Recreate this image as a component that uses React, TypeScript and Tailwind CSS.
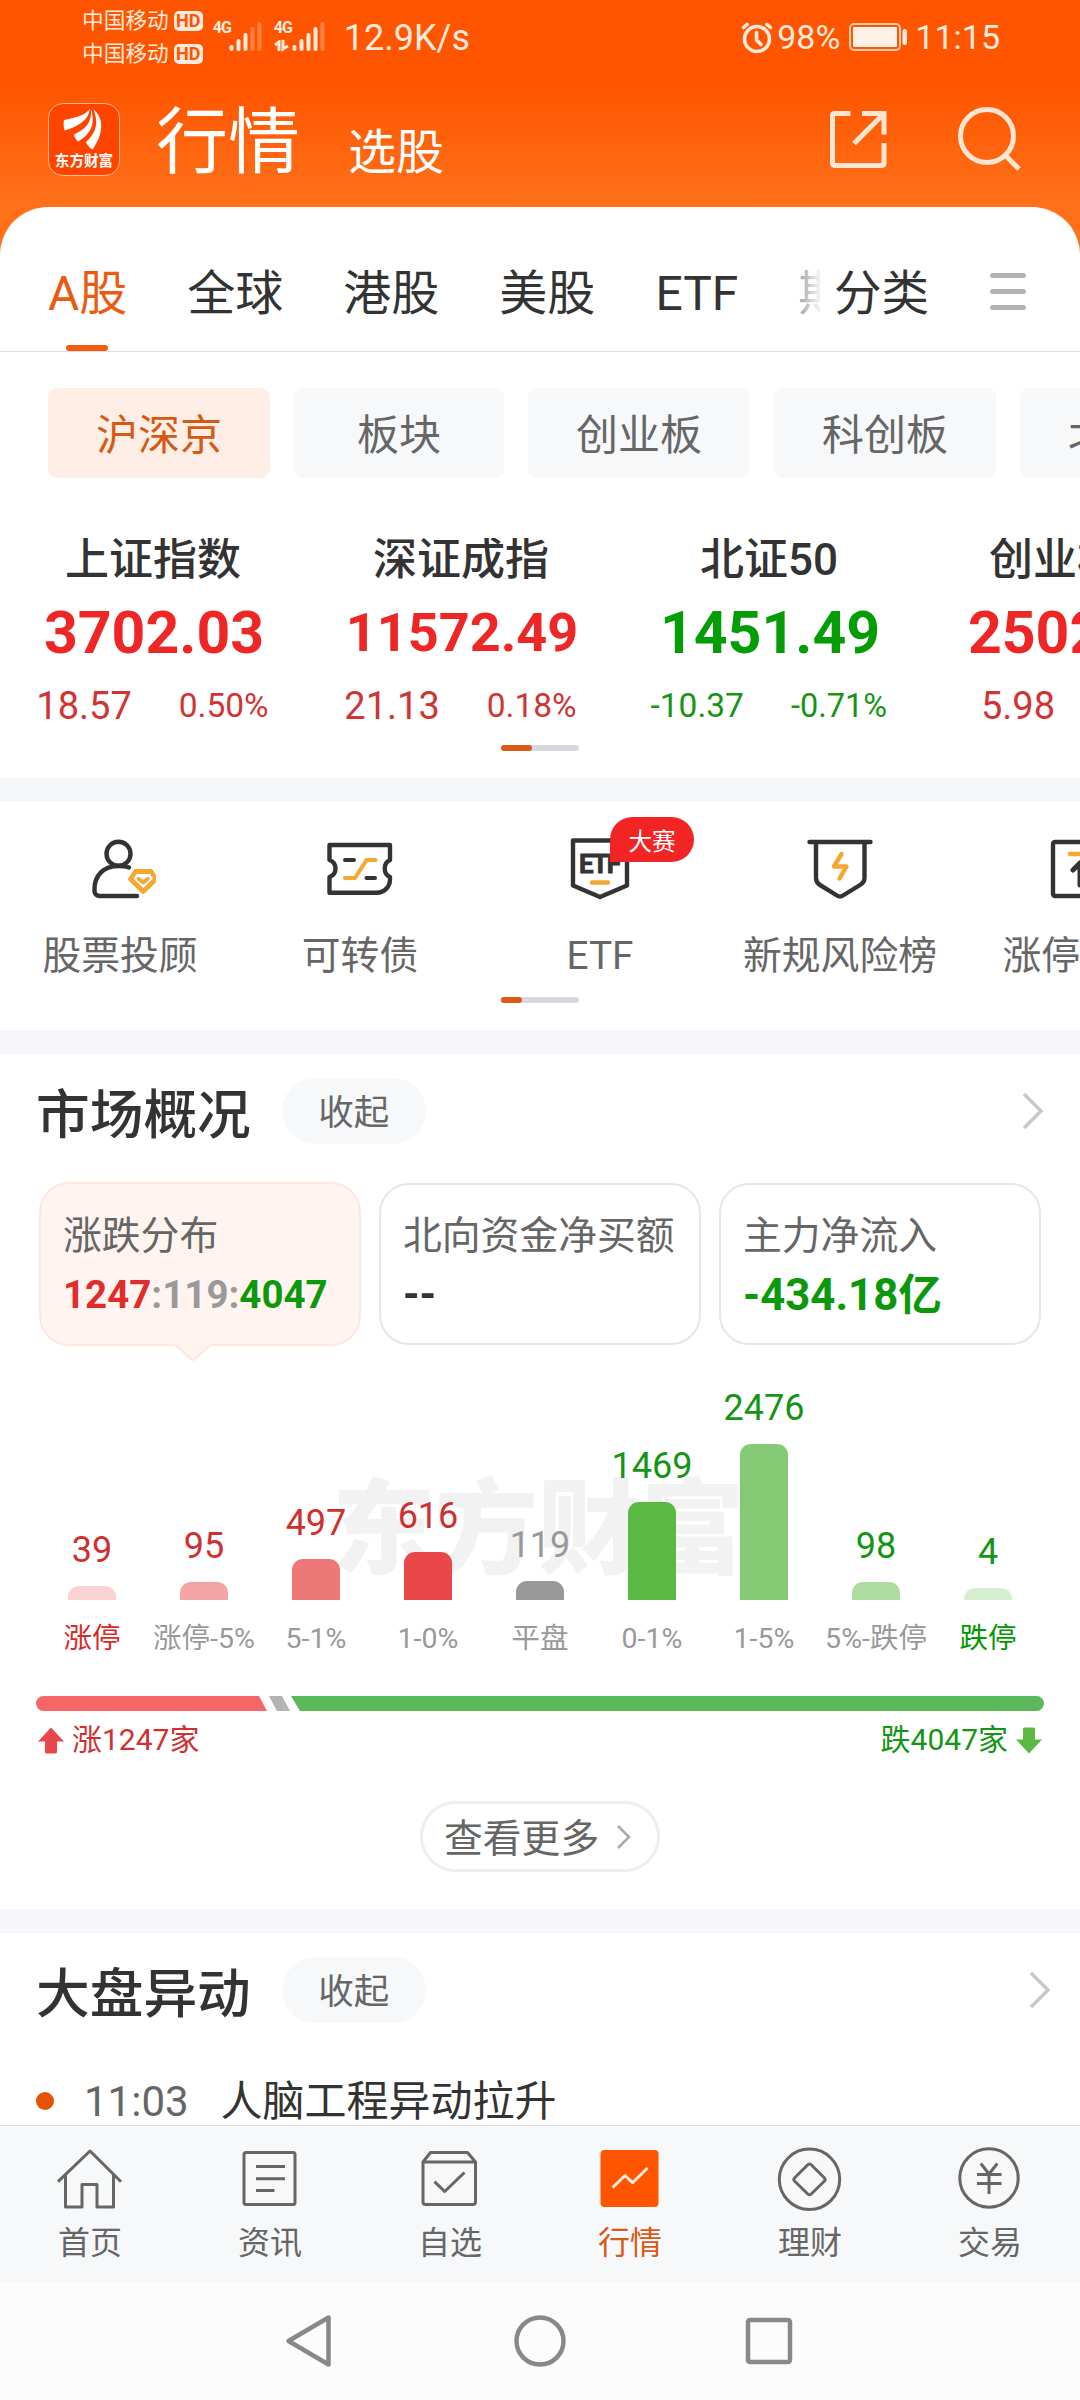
import React from 'react';

type Trend = 'up' | 'down';

interface IndexQuote {
  name: string;
  value: string;
  change: string;
  percent: string;
  trend: Trend;
}

const tabs = ['A股', '全球', '港股', '美股', 'ETF', '期货'];

const chips = ['沪深京', '板块', '创业板', '科创板', '北交所'];

const indices: IndexQuote[] = [
  { name: '上证指数', value: '3702.03', change: '18.57', percent: '0.50%', trend: 'up' },
  { name: '深证成指', value: '11572.49', change: '21.13', percent: '0.18%', trend: 'up' },
  { name: '北证50', value: '1451.49', change: '-10.37', percent: '-0.71%', trend: 'down' },
  { name: '创业板指', value: '2502.66', change: '5.98', percent: '0.24%', trend: 'up' },
];

const distribution = [
  { label: '涨停', count: 39, height: 14, bar: 'bg-[#f9d2d2]', text: 'text-[#cf3030]', labelColor: 'text-[#d82828]' },
  { label: '涨停-5%', count: 95, height: 18, bar: 'bg-[#f3a5a5]', text: 'text-[#cf3030]', labelColor: 'text-[#999999]' },
  { label: '5-1%', count: 497, height: 41, bar: 'bg-[#ee7777]', text: 'text-[#cf3030]', labelColor: 'text-[#999999]' },
  { label: '1-0%', count: 616, height: 48, bar: 'bg-[#e84848]', text: 'text-[#cf3030]', labelColor: 'text-[#999999]' },
  { label: '平盘', count: 119, height: 19, bar: 'bg-[#999999]', text: 'text-[#999999]', labelColor: 'text-[#999999]' },
  { label: '0-1%', count: 1469, height: 98, bar: 'bg-[#5ab942]', text: 'text-[#159515]', labelColor: 'text-[#999999]' },
  { label: '1-5%', count: 2476, height: 156, bar: 'bg-[#84ca74]', text: 'text-[#159515]', labelColor: 'text-[#999999]' },
  { label: '5%-跌停', count: 98, height: 18, bar: 'bg-[#addca1]', text: 'text-[#159515]', labelColor: 'text-[#999999]' },
  { label: '跌停', count: 4, height: 12, bar: 'bg-[#d6eed0]', text: 'text-[#159515]', labelColor: 'text-[#009900]' },
];

const SignalBars = ({ active }: { active: number }) => (
  <svg width="34" height="32" viewBox="0 0 34 32" stroke="#ffeadb" strokeWidth="4" strokeLinecap="round">
    {[25, 19, 13, 7, 2].map((top, i) => (
      <path key={i} d={`M${2.5 + i * 7} ${top + 2}V29`} opacity={i < active ? 1 : 0.3} />
    ))}
  </svg>
);

const StatusBar = () => (
  <div className="flex h-[75px] items-start text-[#ffeadb]">
    <div className="ml-[82px] flex flex-col gap-[11px] pt-[10px]">
      {[0, 1].map(i => (
        <div key={i} className="flex h-[22px] items-center gap-[5px]">
          <span className="text-[21.7px] leading-[22px]">中国移动</span>
          <span className="flex h-[20px] w-[29px] items-center justify-center rounded-[5px] bg-[#ffeadb] text-[18px] leading-none font-bold text-[#ff5500]">
            HD
          </span>
        </div>
      ))}
    </div>
    <div className="mt-[20px] ml-[10px] flex">
      <span className="w-[16px] text-[16px] leading-[16px] font-bold tracking-[-1px]">4G</span>
      <SignalBars active={3} />
    </div>
    <div className="mt-[20px] ml-[11px] flex">
      <div className="w-[18px]">
        <span className="block text-[16px] leading-[16px] font-bold tracking-[-1px]">4G</span>
        <svg width="16" height="12" viewBox="0 0 16 12" className="mt-[4px]" fill="none" stroke="#ffeadb" strokeWidth="3">
          <path d="M1 5L5 2V11M9 0V9L14 6" />
        </svg>
      </div>
      <SignalBars active={4} />
    </div>
    <span className="mt-[19px] ml-[18px] text-[36px] leading-[38px]">12.9K/s</span>
    <div className="mt-[18px] mr-[80px] ml-auto flex items-center">
      <svg width="32" height="34" viewBox="0 0 32 34" fill="none" stroke="#ffeadb" strokeWidth="3.6" strokeLinecap="round">
        <circle cx="16" cy="19" r="12.5" />
        <path d="M15.5 12.500V20L20 24.500M2.500 7.500L6 4.500M29.500 7.500L26 4.500" />
      </svg>
      <span className="ml-[4px] text-[34px] leading-[38px]">98%</span>
      <svg width="60" height="28" viewBox="0 0 60 28" className="ml-[9px]">
        <rect x="1" y="1" width="50" height="26" rx="4" fill="none" stroke="#ffcaa8" strokeWidth="2" />
        <rect x="4" y="4" width="44" height="20" rx="1" fill="#fff0e8" />
        <rect x="53.500" y="6" width="4.500" height="16" rx="2" fill="#ffeadb" />
      </svg>
      <span className="ml-[6px] text-[34px] leading-[38px]">11:15</span>
    </div>
  </div>
);

const Header = () => (
  <div className="flex h-[132px] items-start pt-[28px] pr-[59px] pl-[48px]">
    <div className="flex h-[73px] w-[72px] flex-col items-center rounded-[15px] border border-[#ffb893] bg-[#ff4400]">
      <svg width="72" height="46" viewBox="0 0 72 46" fill="white" className="shrink-0">
        <path d="M42 4.500C38 11 30 13 16 16C15.300 19 15.500 23 16.500 26.500C32 22 41 15 42 4.500Z" />
        <path d="M43 5.500C44 18 38 25 26 30.500C26.500 33 28 36 30 37.500C42 31 48 20 43 5.500Z" />
        <path d="M45.500 5.500C55 13 57 28 44.500 45.500C41.500 44 39 41 38 38C49 28 50.500 18 45.500 5.500Z" />
      </svg>
      <span className="mt-[3px] text-[14.6px] leading-[17px] font-bold whitespace-nowrap text-white">东方财富</span>
    </div>
    <h1 className="mt-[4px] ml-[36px] text-[72px] leading-[72px] text-white">行情</h1>
    <span className="mt-[26px] ml-[48px] text-[48px] leading-[48px] text-white">选股</span>
    <svg width="60" height="60" viewBox="0 0 60 60" className="mt-[6px] ml-auto" fill="none" stroke="#ffe6d3" strokeWidth="5">
      <path d="M22.500 4.500H7Q4.500 4.500 4.500 7V54Q4.500 56.500 7 56.500H53Q56 56.500 56 54V34M34 4.500H56V25.500M56 4.500L26 34.500" />
    </svg>
    <svg width="64" height="68" viewBox="0 0 64 68" className="mt-[3px] ml-[69px]" fill="none" stroke="#ffe6d3" strokeWidth="5">
      <circle cx="30" cy="30" r="26.500" />
      <path d="M48 49L62 63" />
    </svg>
  </div>
);

const TabBar = () => (
  <div className="flex h-[145px] border-b border-[#dddddd] pl-[48px]">
    <div className="relative flex w-[772px] gap-[60px] overflow-hidden text-[48px] leading-[48px] whitespace-nowrap text-[#333333]">
      {tabs.map((tab, i) => (
        <div key={tab} className={`relative shrink-0 pt-[63px] ${i === 0 ? 'text-[#ea5a10]' : ''}`}>
          {tab}
          {i === 0 && <div className="absolute bottom-0 left-[18px] h-[6px] w-[42px] rounded-full bg-[#f25c10]" />}
        </div>
      ))}
      <div className="absolute top-0 right-0 h-[130px] w-[40px] bg-gradient-to-r from-white/20 to-white/95" />
    </div>
    <span className="mt-[63px] ml-[14px] text-[47.500px] leading-[48px] text-[#333333]">分类</span>
    <div className="mt-[66px] ml-[61px] flex w-[36px] flex-col gap-[11px]">
      <div className="h-[5px] rounded-full bg-[#b3b3b3]" />
      <div className="h-[5px] rounded-full bg-[#b3b3b3]" />
      <div className="h-[5px] rounded-full bg-[#b3b3b3]" />
    </div>
  </div>
);

const Chips = () => (
  <div className="flex gap-[24px] overflow-hidden pt-[36px] pl-[48px]">
    {chips.map((chip, i) => (
      <div
        key={chip}
        className={`flex h-[90px] min-w-[210px] shrink-0 items-center justify-center rounded-[9px] px-[48px] text-[42px] leading-[44px] ${
          i === 0 ? 'bg-[#ffeee6] text-[#d45a14]' : 'bg-[#f7f8fa] text-[#666666]'
        }`}
      >
        <span className="pt-[5px]">{chip}</span>
      </div>
    ))}
  </div>
);

const PageIndicator = ({ wide = false }: { wide?: boolean }) => (
  <div className="mx-auto h-[6px] w-[78px] rounded-full bg-[#d5d8dc]">
    <div className={`h-[6px] rounded-full bg-[#dd5a14] ${wide ? 'w-[31px]' : 'w-[21px]'}`} />
  </div>
);

const IndexList = () => (
  <div className="pt-[60px] pb-[27px]">
    <div className="flex overflow-hidden">
      {indices.map(item => {
        const up = item.trend === 'up';
        const size = item.value.length > 7 ? 'text-[54px]' : 'text-[59px]';
        return (
          <div key={item.name} className="flex w-[308px] shrink-0 flex-col items-center">
            <div className="pr-[2px] text-[44px] leading-[44px] font-medium text-[#333333]">{item.name}</div>
            <div className={`mt-[21px] font-bold leading-[60px] ${size} ${up ? 'text-[#ee2626]' : 'text-[#059d05]'}`}>
              {item.value}
            </div>
            <div className={`mt-[24px] flex items-center gap-[47px] pr-[3px] leading-[38px] ${up ? 'text-[#cf3535]' : 'text-[#159515]'}`}>
              <span className={`min-w-[94px] text-right ${up ? 'text-[38px]' : 'text-[33.500px]'}`}>{item.change}</span>
              <span className={up ? 'text-[33.500px]' : 'text-[32.500px]'}>{item.percent}</span>
            </div>
          </div>
        );
      })}
    </div>
    <div className="mt-[20px]">
      <PageIndicator wide />
    </div>
  </div>
);

const Divider = () => <div className="h-[24px] bg-[#f6f7fa]" />;

const iconProps = {
  width: 72,
  height: 72,
  viewBox: '0 0 72 72',
  fill: 'none',
  stroke: '#333333',
  strokeWidth: 4.4,
  strokeLinecap: 'round' as const,
  strokeLinejoin: 'round' as const,
};

const features = [
  {
    label: '股票投顾',
    icon: (
      <svg {...iconProps}>
        <circle cx="34.500" cy="20.800" r="12" />
        <path d="M45 34.500C42 33.300 38 33 34.500 33C19 33 10.500 43 10.500 56V58C10.500 61 12.500 63 16 63H53" />
        <path d="M51.500 38.500H67L72 46L59.200 58.500L46.500 46Z" stroke="#f5a732" strokeWidth="4.800" />
        <path d="M54.500 45.800L59.200 49.500L63.800 45.800" stroke="#f5a732" strokeWidth="3.800" />
      </svg>
    ),
  },
  {
    label: '可转债',
    icon: (
      <svg {...iconProps}>
        <path d="M5.500 12H66V27C59 30 59 41 66 44V46.500C66 54 60 59.700 53 59.700H5.500V44C13.500 41 13.500 30 5.500 27Z" />
        <path d="M21 27H30M42.500 45H51" strokeWidth="4" />
        <path d="M21 45H31L42.500 27H51.500" stroke="#f5a732" strokeWidth="4" />
      </svg>
    ),
  },
  {
    label: 'ETF',
    badge: '大赛',
    icon: (
      <svg {...iconProps}>
        <path d="M9 7.500H63V52.500L36 64L9 52.500Z" />
        <text x="15" y="39.500" fontSize="26" fontWeight="700" textLength="42" fill="#333333" strokeWidth="0.800">
          ETF
        </text>
        <path d="M28 49.500H44" stroke="#f5a732" />
      </svg>
    ),
  },
  {
    label: '新规风险榜',
    icon: (
      <svg {...iconProps}>
        <path d="M5.500 9H66.500M12 9V45C12 48.500 13.500 50.500 16 52L33 62.500Q36 64.500 39 62.500L56 52C58.500 50.500 60.500 48.500 60.500 45V9" />
        <path d="M37.500 21L30 33.500H42.500L35.500 45.500" stroke="#f5a732" />
      </svg>
    ),
  },
  {
    label: '涨停分析',
    icon: (
      <svg {...iconProps}>
        <rect x="9" y="9" width="54" height="54" rx="2" />
        <path d="M26 21H46" stroke="#f5a732" />
        <path d="M36 30V52M29 37L36 30L43 37" strokeWidth="5" />
      </svg>
    ),
  },
];

const FeatureList = () => (
  <div className="pt-[31px] pb-[27px]">
    <div className="flex overflow-x-clip">
      {features.map(item => (
        <div key={item.label} className="relative flex w-[240px] shrink-0 flex-col items-center">
          {item.icon}
          {item.badge && (
            <div className="absolute top-[-16px] left-[130px] flex h-[45px] w-[84px] items-center justify-center rounded-full rounded-bl-none bg-[#f22424] pt-[4px] text-[23.500px] leading-[24px] text-white">
              {item.badge}
            </div>
          )}
          <div className="mt-[31px] text-[38.800px] leading-[40px] text-[#666666]">{item.label}</div>
        </div>
      ))}
    </div>
    <div className="mt-[21px]">
      <PageIndicator />
    </div>
  </div>
);

const SectionTitle = ({ title, arrow }: { title: string; arrow: string }) => (
  <div className="flex h-[66px] items-center pl-[36px]">
    <h2 className="pt-[9px] text-[53.700px] leading-[60px] font-medium text-[#333333]">{title}</h2>
    <div className="ml-[31px] flex h-[66px] w-[144px] items-center justify-center rounded-[33px] bg-[#f7f8fa] pt-[5px] text-[35.500px] text-[#666666]">
      收起
    </div>
    <svg width="22" height="38" viewBox="0 0 22 38" className={`ml-auto ${arrow}`} fill="none" stroke="#c8c8c8" strokeWidth="3.500">
      <path d="M2 2L19 19L2 36" />
    </svg>
  </div>
);

const SummaryCards = () => (
  <div className="mt-[38px] flex h-[164px] items-center gap-[18px] pl-[39px]">
    <div className="relative h-[164px] w-[322px] rounded-[30px] border-2 border-[#fce8de] bg-[#fff4ef] pt-[32px] pl-[22px]">
      <div className="text-[38.800px] leading-[40px] text-[#666666]">涨跌分布</div>
      <div className="mt-[17px] text-[38.500px] leading-[44px] font-bold whitespace-nowrap text-[#999999]">
        <span className="text-[#e02c2c]">1247</span>:119:<span className="text-[#0b980b]">4047</span>
      </div>
      <svg width="40" height="18" viewBox="0 0 40 18" className="absolute top-[159px] left-[132px]" fill="#fff4ef" stroke="#fce8de" strokeWidth="2">
        <path d="M0 1H2L17 15.500Q20 18 23 15.500L38 1H40" />
        <path d="M2 0.500H38" stroke="#fff4ef" strokeWidth="3" />
      </svg>
    </div>
    <div className="h-[162px] w-[322px] rounded-[30px] border-2 border-[#e6e6e6] pt-[31px] pl-[22px]">
      <div className="text-[38.800px] leading-[40px] whitespace-nowrap text-[#666666]">北向资金净买额</div>
      <div className="mt-[17px] text-[42px] leading-[44px] font-bold text-[#333333]">--</div>
    </div>
    <div className="h-[162px] w-[322px] rounded-[30px] border-2 border-[#e6e6e6] pt-[31px] pl-[22px]">
      <div className="text-[38.800px] leading-[40px] text-[#666666]">主力净流入</div>
      <div className="mt-[17px] text-[43.700px] leading-[44px] font-bold text-[#0b980b]">-434.18亿</div>
    </div>
  </div>
);

const DistributionChart = () => (
  <div className="px-[36px]">
    <div className="relative h-[254px]">
      <div className="absolute top-[125px] left-[296px] text-[103px] leading-[120px] font-black whitespace-nowrap text-[#f2f2f2]">
        东方财富
      </div>
      <div className="relative flex h-full items-end">
        {distribution.map(item => (
          <div key={item.label} className="flex w-[112px] flex-col items-center">
            <div className={`mb-[17px] text-[36px] leading-[38px] ${item.text}`}>{item.count}</div>
            <div className={`w-[48px] rounded-t-[11px] ${item.bar}`} style={{ height: item.height }} />
          </div>
        ))}
      </div>
    </div>
    <div className="mt-[25px] flex">
      {distribution.map(item => (
        <div key={item.label} className={`w-[112px] text-center text-[28.500px] leading-[28px] whitespace-nowrap ${item.labelColor}`}>
          {item.label}
        </div>
      ))}
    </div>
    <svg width="1008" height="15" viewBox="0 0 1008 15" className="mt-[43px] block">
      <path d="M7.500 0H223L231 15H7.500A7.500 7.500 0 0 1 7.500 0Z" fill="#f66666" />
      <path d="M233 0H246L254 15H241Z" fill="#b3b3b3" />
      <path d="M255 0H1000.500A7.500 7.500 0 0 1 1000.500 15H264Z" fill="#5bb95b" />
    </svg>
    <div className="mt-[14px] flex items-center justify-between text-[30px] leading-[30px]">
      <div className="flex items-center text-[#cf3030]">
        <svg width="26" height="27" viewBox="0 0 26 27" className="ml-[2px]" fill="#e84848">
          <path d="M13 0.500L26 14.500H19V25Q19 26.500 17.500 26.500H8.500Q7 26.500 7 25V14.500H0Z" />
        </svg>
        <span className="ml-[8px]">涨1247家</span>
      </div>
      <div className="flex items-center text-[#159515]">
        <span>跌4047家</span>
        <svg width="26" height="27" viewBox="0 0 26 27" className="mr-[2px] ml-[8px]" fill="#5ab942">
          <path d="M13 26.500L26 12.500H19V2Q19 0.500 17.500 0.500H8.500Q7 0.500 7 2V12.500H0Z" />
        </svg>
      </div>
    </div>
  </div>
);

const tabIconProps = { ...iconProps, stroke: '#666666', strokeWidth: 3, strokeLinecap: 'butt' as const };

const bottomTabs = [
  {
    label: '首页',
    icon: (
      <svg {...tabIconProps}>
        <path d="M4 39.700L36 9L67 39.700M11.500 33V65H28V42.500H43V65H59.500V33" />
      </svg>
    ),
  },
  {
    label: '资讯',
    icon: (
      <svg {...tabIconProps}>
        <rect x="10" y="10.500" width="51" height="52" rx="2" />
        <path d="M22 24.500H51M22 36.700H51M22 48.500H40.500" />
      </svg>
    ),
  },
  {
    label: '自选',
    icon: (
      <svg {...tabIconProps}>
        <path d="M9 20L16.500 10.500H53.500L61.500 20V60Q61.500 62.500 59 62.500H11.500Q9 62.500 9 60ZM9 20H61.500" />
        <path d="M20.500 39.700L30.700 49.500L50.500 30.500" />
      </svg>
    ),
  },
  {
    label: '行情',
    active: true,
    icon: (
      <svg {...tabIconProps}>
        <rect x="6.500" y="8" width="58" height="57" rx="4" fill="#ff5500" stroke="none" />
        <path d="M18.700 45.500L31 33.500L38.600 40.700L53.500 26" stroke="#ffeadb" />
      </svg>
    ),
  },
  {
    label: '理财',
    icon: (
      <svg {...tabIconProps}>
        <circle cx="35.500" cy="37.300" r="30.200" />
        <path d="M33.800 22.800Q35.500 21 37.200 22.800L50.300 35.800Q52 37.500 50.300 39.200L37.200 52Q35.500 53.500 33.800 52L20.700 39.200Q19 37.500 20.700 35.800Z" />
      </svg>
    ),
  },
  {
    label: '交易',
    icon: (
      <svg {...tabIconProps}>
        <circle cx="35" cy="36" r="29.200" />
        <path d="M26.800 21.500L35 32L43.300 21.500M35 32V52M23 32.500H47.500M23 41.500H47.500" />
      </svg>
    ),
  },
];

const BottomTabs = () => (
  <div className="flex h-[157px] border-t border-[#e0e0e0] bg-[#f7f8fa] pt-[16px]">
    {bottomTabs.map(tab => (
      <div key={tab.label} className="flex w-[180px] flex-col items-center">
        {tab.icon}
        <span className={`mt-[13px] text-[32px] leading-[32px] ${tab.active ? 'text-[#d85a18]' : 'text-[#666666]'}`}>{tab.label}</span>
      </div>
    ))}
  </div>
);

const NavigationBar = () => (
  <div className="flex h-[118px] items-center justify-center gap-[170px] bg-[#fcfcfc]">
    <svg width="60" height="60" viewBox="0 0 60 60" fill="none" stroke="#888888" strokeWidth="4.500" strokeLinejoin="round">
      <path d="M48.500 6.500V53.500L8.500 30Z" />
    </svg>
    <svg width="60" height="60" viewBox="0 0 60 60" fill="none" stroke="#888888" strokeWidth="4.500">
      <circle cx="30" cy="30" r="23.500" />
    </svg>
    <svg width="60" height="60" viewBox="0 0 60 60" fill="none" stroke="#888888" strokeWidth="4.500">
      <rect x="8" y="9" width="42" height="42" rx="2" />
    </svg>
  </div>
);

const App: React.FC = () => {
  return (
    <div className="h-[2400px] w-[1080px] overflow-hidden bg-[linear-gradient(to_bottom,#ff5500_0,#ff5500_85px,#ff7019_200px)] font-['Roboto','Noto_Sans_CJK_SC',sans-serif]">
      <StatusBar />
      <Header />
      <div className="rounded-t-[48px] bg-white">
        <div className="h-[1918px] overflow-hidden">
          <TabBar />
          <Chips />
          <IndexList />
          <Divider />
          <FeatureList />
          <Divider />
          <div className="pt-[24px] pb-[37px]">
            <SectionTitle title="市场概况" arrow="mr-[36px]" />
            <SummaryCards />
            <DistributionChart />
            <div className="mx-auto mt-[46px] flex h-[71px] w-[240px] items-center rounded-full border-[3px] border-[#eeeeee] pl-[21px]">
              <span className="pt-[5px] text-[38.800px] leading-[40px] text-[#666666]">查看更多</span>
              <svg width="16" height="26" viewBox="0 0 16 26" className="ml-[17px]" fill="none" stroke="#aaaaaa" strokeWidth="2.500">
                <path d="M2 2L13 13L2 24" />
              </svg>
            </div>
          </div>
          <Divider />
          <div className="pt-[24px]">
            <SectionTitle title="大盘异动" arrow="mr-[29px]" />
            <div className="mt-[58px] flex items-center pl-[36px] text-[42px] leading-[42px]">
              <div className="-mt-[2px] h-[18px] w-[18px] rounded-full bg-[#e65300]" />
              <span className="ml-[30px] text-[#666666]">11:03</span>
              <span className="ml-[32px] text-[#333333]">人脑工程异动拉升</span>
            </div>
          </div>
        </div>
        <BottomTabs />
        <NavigationBar />
      </div>
    </div>
  );
};

export default App;
